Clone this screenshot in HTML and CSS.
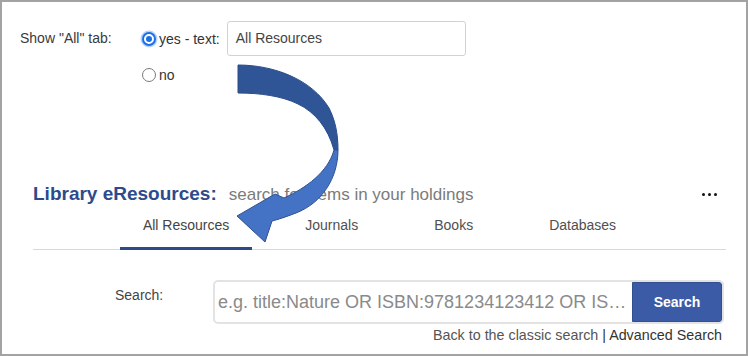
FILE: index.html
```html
<!DOCTYPE html>
<html>
<head>
<meta charset="utf-8">
<link rel="stylesheet" href="styles.css">
</head>
<body>
<div class="frame">
  <div class="settings">
    <div class="set-label">Show "All" tab:</div>
    <div class="set-options">
      <div class="opt-row">
        <span class="radio on"></span><span class="opt-text">yes - text:</span>
        <div class="text-input">All Resources</div>
      </div>
      <div class="opt-row no-row">
        <span class="radio"></span><span class="opt-text">no</span>
      </div>
    </div>
  </div>

  <div class="widget">
    <div class="title-row">
      <div class="title"><span class="brand">Library eResources:</span><span class="subtitle">search for items in your holdings</span></div>
      <div class="more"><span></span><span></span><span></span></div>
    </div>
    <nav class="tabs">
      <span class="tab active">All Resources</span>
      <span class="tab">Journals</span>
      <span class="tab">Books</span>
      <span class="tab">Databases</span>
    </nav>
    <div class="search-row">
      <div class="search-label">Search:</div>
      <div class="search-box">
        <div class="query">e.g. title:Nature OR ISBN:9781234123412 OR IS…</div>
        <div class="search-btn">Search</div>
      </div>
    </div>
    <div class="links"><span class="classic">Back to the classic search</span> | Advanced Search</div>
  </div>

  <svg class="arrow" width="748" height="356" viewBox="0 0 748 356">
    <path d="M238,65 C275,65 312,80 329,108 C335,120 338,133 338,150 L334,150 C328,128 315,112 298,104 C282,96 260,93 238,93 Z" fill="#2f5597" stroke="#2a4d8a" stroke-width="1" stroke-linejoin="round"/>
    <path d="M338,150 C338,178 322,203 296,213 C288,216 280,219 272,221 L265,242 L237,216 L275,194 L284,198 C306,188 328,172 334,150 Z" fill="#4472c4" stroke="#2f528f" stroke-width="1" stroke-linejoin="round"/>
  </svg>
</div>
</body>
</html>
```

FILE: styles.css
```css
html, body {
  margin: 0;
  padding: 0;
  background: #fff;
}

.frame {
  position: relative;
  width: 748px;
  height: 356px;
  box-sizing: border-box;
  border: 2px solid #a3a3a3;
  font-family: "Liberation Sans", Arial, sans-serif;
  color: #333;
  overflow: hidden;
}

/* settings block */
.settings {
  display: flex;
  padding: 19px 0 0 18px;
}

.set-label {
  width: 122px;
  height: 35px;
  line-height: 35px;
  font-size: 14px;
  color: #3a3a3a;
}

.set-options {
  display: flex;
  flex-direction: column;
}

.opt-row {
  display: flex;
  align-items: center;
  height: 35px;
}

.no-row {
  height: 18px;
  margin-top: 10px;
}

.radio {
  width: 14px;
  height: 14px;
  box-sizing: border-box;
  border-radius: 50%;
  border: 1px solid #7a7a7a;
  background: #fff;
  position: relative;
  flex: none;
}

.radio.on {
  border: 2px solid #1a6fe6;
  box-shadow: 0 0 0 1.5px #b8d3fb;
}

.radio.on::after {
  content: "";
  position: absolute;
  left: 2px;
  top: 2px;
  width: 6px;
  height: 6px;
  border-radius: 50%;
  background: #1a6fe6;
}

.opt-text {
  margin-left: 3px;
  font-size: 14px;
  color: #333;
}

.text-input {
  margin-left: 7px;
  width: 239px;
  height: 35px;
  box-sizing: border-box;
  border: 1px solid #d2d2d2;
  border-radius: 3px;
  padding-left: 8px;
  line-height: 33px;
  font-size: 14px;
  color: #444;
}

/* widget */
.widget {
  margin: 99px 20px 0 31px;
}

.title-row {
  display: flex;
  align-items: center;
  justify-content: space-between;
  height: 22px;
}

.title {
  line-height: 22px;
  white-space: nowrap;
}

.brand {
  font-size: 19px;
  font-weight: bold;
  color: #2d4b8b;
}

.subtitle {
  margin-left: 12px;
  font-size: 17px;
  color: #7b7b7b;
}

.more {
  display: flex;
  gap: 3px;
  margin-right: 9px;
}

.more span {
  width: 3px;
  height: 3px;
  border-radius: 50%;
  background: #111;
}

.tabs {
  display: flex;
  justify-content: center;
  border-bottom: 1px solid #d9d9d9;
}

.tab {
  margin: 0 15px -1px;
  padding: 11px 23px 13px;
  line-height: 18px;
  font-size: 14px;
  color: #505050;
  border-bottom: 3px solid transparent;
}

.tab.active {
  border-bottom-color: #2d4b8b;
  color: #444;
}

.search-row {
  display: flex;
  margin-top: 30px;
  margin-right: 2px;
}

.search-label {
  margin-left: 82px;
  width: 98px;
  padding-top: 6px;
  line-height: 18px;
  font-size: 14px;
  color: #444;
}

.search-box {
  display: flex;
  width: 511px;
  height: 44px;
  box-sizing: border-box;
  border: 2px solid #e3e3e3;
  border-radius: 5px;
}

.query {
  flex: 1;
  padding-left: 3px;
  line-height: 40px;
  font-size: 18px;
  color: #8a8a8a;
  white-space: nowrap;
  overflow: hidden;
}

.search-btn {
  width: 90px;
  box-sizing: border-box;
  background: #3b5ba6;
  border: 1px solid #32508f;
  border-radius: 0 3px 3px 0;
  color: #fff;
  font-weight: bold;
  font-size: 14px;
  line-height: 38px;
  text-align: center;
}

.links {
  margin-top: 3px;
  padding-right: 4px;
  text-align: right;
  line-height: 16px;
  font-size: 14.3px;
  color: #333;
}

.classic {
  color: #555;
}

.arrow {
  position: absolute;
  left: -2px;
  top: -2px;
  pointer-events: none;
}
```
